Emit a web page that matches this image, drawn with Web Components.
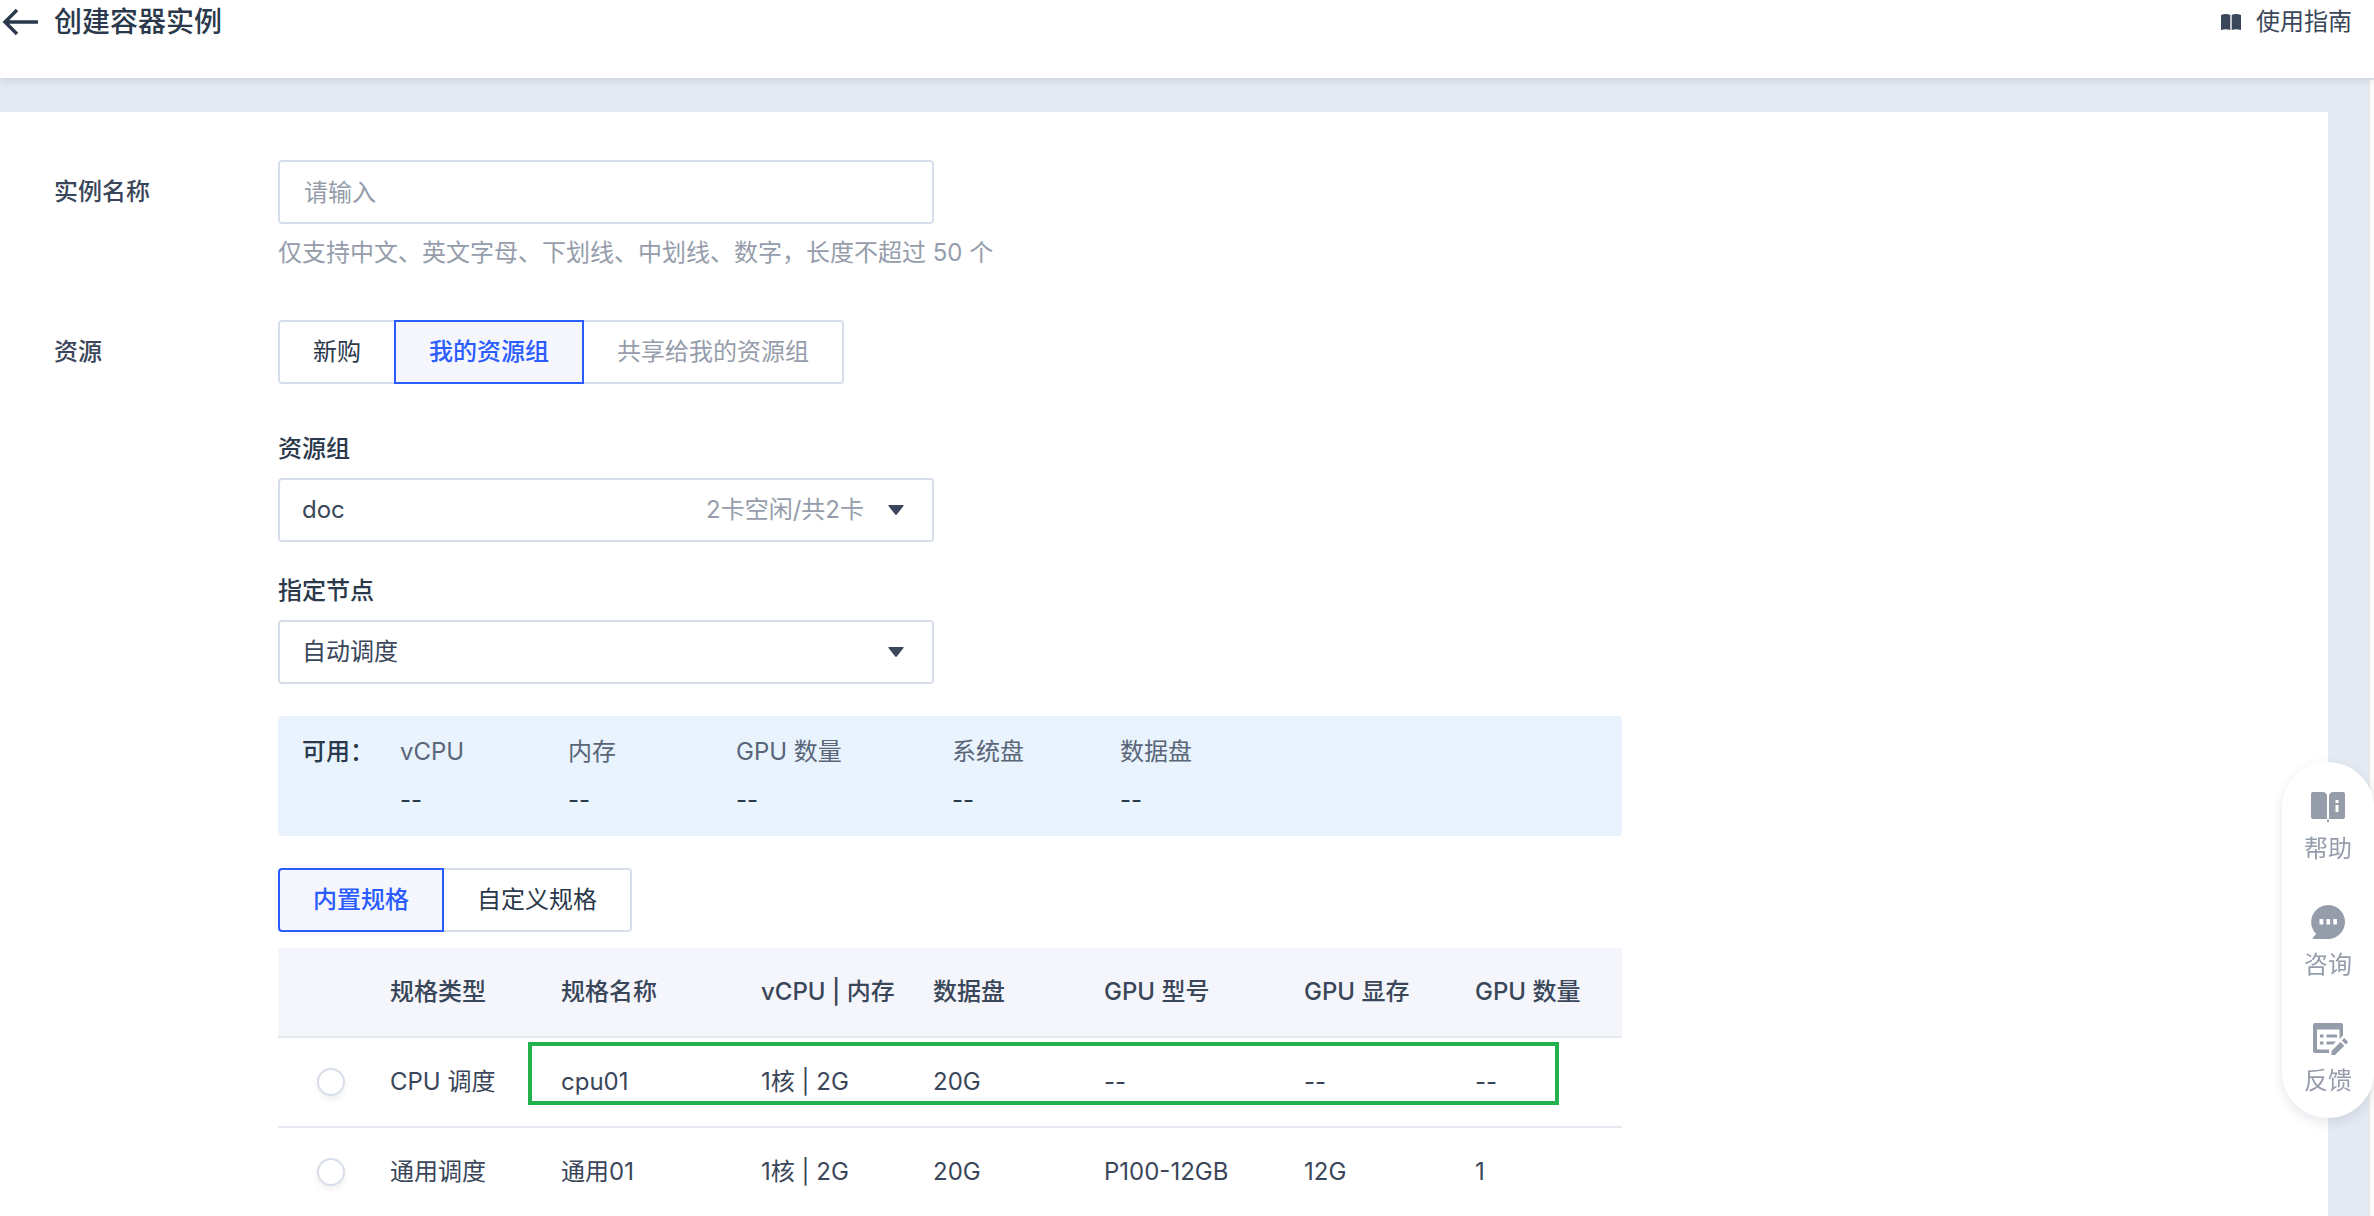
<!DOCTYPE html>
<html lang="zh-CN">
<head>
<meta charset="utf-8">
<meta name="viewport" content="width=device-width, initial-scale=1">
<title>创建容器实例</title>
<style>
  :root {
    --ink: #2a394b;
    --text: #3a4659;
    --soft: #5a6577;
    --muted: #959dab;
    --line: #d8dee9;
    --rule: #e4e8ef;
    --blue: #2b5cff;
    --tint: #f5f7fd;
    --canvas: #e4e9f2;
  }
  html, body { height: 100%; margin: 0; }
  body {
    overflow: hidden;
    background: #fff;
    color: var(--text);
    font: 24px/34px Inter, "Noto Sans CJK SC", sans-serif;
  }
</style>
</head>
<body>
<app-shell>
  <app-header slot="header" heading="创建容器实例" guide="使用指南"></app-header>
  <text-field label="实例名称" placeholder="请输入" hint="仅支持中文、英文字母、下划线、中划线、数字，长度不超过 50 个"></text-field>
  <form-row label="资源">
    <seg-group options="新购|我的资源组|共享给我的资源组" active="1" muted="2"></seg-group>
    <pick-list label="资源组" value="doc" note="2卡空闲/共2卡"></pick-list>
    <pick-list label="指定节点" value="自动调度"></pick-list>
    <quota-panel></quota-panel>
    <seg-group class="spec" options="内置规格|自定义规格" active="0"></seg-group>
    <spec-table></spec-table>
  </form-row>
  <help-dock slot="dock"></help-dock>
</app-shell>

<script>
const define = (name, render) => customElements.define(name, class extends HTMLElement {
  connectedCallback() {
    if (this.shadowRoot) return;
    const attr = key => this.getAttribute(key) || '';
    this.attachShadow({ mode: 'open' }).innerHTML =
      '<style>:host,*{box-sizing:border-box}</style>' + render(attr);
  }
});

define('app-shell', () => `
  <style>
    :host { display: flex; flex-direction: column; height: 100vh; }
    .body { flex: 1; min-height: 0; display: flex; background: var(--canvas); overflow: hidden; }
    main { flex: 1; min-width: 0; margin: 34px 40px 0 0; padding: 48px 54px 0; background: #fff;
           display: flex; flex-direction: column; gap: 50px; }
    .track { width: 6px; margin-top: 2px; background: #fafafa; border-left: 2px solid #e8e8e8; }
  </style>
  <slot name="header"></slot>
  <div class="body"><main><slot></slot></main><div class="track"></div></div>
  <slot name="dock"></slot>`);

define('app-header', attr => `
  <style>
    :host { display: flex; align-items: flex-start; justify-content: space-between; height: 78px;
            padding: 0 22px 0 0; background: #fff; box-shadow: 0 2px 8px rgba(40,60,50,.14);
            position: relative; color: var(--ink); }
    .left, a { display: flex; align-items: center; height: 44px; }
    button { width: 54px; height: 44px; padding: 0; border: 0; background: none; color: inherit; display: flex; align-items: center; }
    h1 { margin: 0; font-size: 28px; line-height: 40px; font-weight: 500; }
    a { gap: 14px; color: var(--text); text-decoration: none; }
  </style>
  <div class="left">
    <button aria-label="返回"><svg width="40" height="28" viewBox="0 0 40 28" fill="none" stroke="currentColor" stroke-width="3.4"><path d="M38 14H5M17 2 5 14l12 12"/></svg></button>
    <h1>${attr('heading')}</h1>
  </div>
  <a href="#"><svg width="22" height="18" viewBox="0 0 22 18" fill="currentColor"><path d="M1 2q5-2 9.300 0v15Q6 15.500 1 17zM11.700 2Q16 0 21 2v15q-5-1.500-9.300 0z"/></svg>${attr('guide')}</a>`);

define('text-field', attr => `
  <style>
    :host { display: grid; grid-template-columns: 224px 1fr; }
    label { line-height: 64px; font-weight: 500; color: var(--text); }
    input { display: block; width: 100%; max-width: 656px; height: 64px; padding: 0 24px; border: 2px solid var(--line);
            border-radius: 4px; background: #fff; font: inherit; color: var(--text); outline: 0; }
    input::placeholder { color: var(--muted); opacity: 1; }
    p { margin: 12px 0 0; color: var(--muted); }
  </style>
  <label for="f">${attr('label')}</label>
  <div><input id="f" type="text" placeholder="${attr('placeholder')}" aria-describedby="h"><p id="h">${attr('hint')}</p></div>`);

define('form-row', attr => `
  <style>
    :host { display: grid; grid-template-columns: 224px minmax(0, 1fr); }
    .label { line-height: 64px; font-weight: 500; }
    .fields { display: flex; flex-direction: column; align-items: flex-start; }
  </style>
  <div class="label">${attr('label')}</div>
  <div class="fields"><slot></slot></div>`);

define('seg-group', attr => `
  <style>
    :host { display: flex; margin-bottom: 48px; }
    :host(.spec) { margin-bottom: 16px; }
    button { height: 64px; padding: 0 33px; margin-left: -2px; border: 2px solid var(--line); background: #fff;
             font: inherit; color: var(--ink); }
    button:first-of-type { margin-left: 0; border-radius: 4px 0 0 4px; }
    button:last-of-type { border-radius: 0 4px 4px 0; }
    button.muted { color: var(--muted); }
    button[aria-pressed=true] { position: relative; border-color: var(--blue); background: var(--tint); color: var(--blue); font-weight: 500; }
  </style>
  ${attr('options').split('|').map((text, i) =>
    `<button aria-pressed="${String(i) === attr('active')}" class="${String(i) === attr('muted') ? 'muted' : ''}">${text}</button>`).join('')}`);

define('pick-list', attr => `
  <style>
    :host { display: block; width: 100%; max-width: 656px; margin-bottom: 32px; }
    label { display: block; margin-bottom: 12px; font-weight: 500; color: var(--ink); }
    .box { display: grid; grid-template-columns: 1fr auto; align-items: center; }
    select { grid-area: 1 / 1 / 2 / 3; appearance: none; width: 100%; height: 64px; padding: 0 22px; border: 2px solid var(--line);
             border-radius: 4px; background: #fff; font: inherit; color: var(--text); outline: 0; }
    .end { grid-area: 1 / 2; display: flex; align-items: center; gap: 24px; padding-right: 30px; color: var(--muted); pointer-events: none; }
    svg { color: var(--text); }
  </style>
  <label for="s">${attr('label')}</label>
  <div class="box">
    <select id="s"><option>${attr('value')}</option></select>
    <span class="end">${attr('note')}<svg width="16" height="10" viewBox="0 0 16 10" fill="currentColor"><path d="M1 0h14q1.200 0 .5 1L9 9.200q-1 1-2 0L.500 1Q-.200 0 1 0z"/></svg></span>
  </div>`);

define('quota-panel', () => `
  <style>
    :host { display: grid; grid-template-columns: 98px 168px 168px 216px 168px 1fr; width: 100%; max-width: 1344px;
            padding: 19px 24px; margin-bottom: 32px; border-radius: 4px; background: #e8f3fe; }
    b { font-weight: 500; color: var(--ink); }
    dl { margin: 0; }
    dt { color: var(--soft); margin-bottom: 14px; }
    dd { margin: 0; color: var(--ink); }
  </style>
  <b>可用：</b>
  ${['vCPU', '内存', 'GPU 数量', '系统盘', '数据盘'].map(t => `<dl><dt>${t}</dt><dd>--</dd></dl>`).join('')}`);

define('spec-table', () => {
  const rows = [
    ['CPU 调度', 'cpu01', '1核 | 2G', '20G', '--', '--', '--'],
    ['通用调度', '通用01', '1核 | 2G', '20G', 'P100-12GB', '12G', '1']
  ];
  return `
  <style>
    :host { display: block; position: relative; width: 100%; max-width: 1344px; }
    table { width: 100%; table-layout: fixed; border-collapse: separate; border-spacing: 0; }
    th, td { height: 90px; padding: 0 0 0 24px; border-bottom: 2px solid var(--rule); text-align: left; font-weight: 400; white-space: nowrap; }
    th { background: #f5f6fb; font-weight: 500; }
    td:first-child { padding-left: 39px; }
    input { appearance: none; display: block; width: 28px; height: 28px; margin: 0; border: 2px solid var(--line); border-radius: 50%;
            background: #fff; box-shadow: 0 4px 6px rgba(0,0,0,.06); }
    .mark { position: absolute; left: 250px; top: 94px; width: 1031px; height: 63px; border: 4px solid #22b14c; pointer-events: none; }
  </style>
  <table>
    <colgroup>${[88, 171, 200, 172, 171, 200, 171, 171].map(w => `<col style="width:${w}px">`).join('')}</colgroup>
    <thead><tr><th></th>${['规格类型', '规格名称', 'vCPU | 内存', '数据盘', 'GPU 型号', 'GPU 显存', 'GPU 数量'].map(t => `<th scope="col">${t}</th>`).join('')}</tr></thead>
    <tbody>${rows.map(r => `<tr><td><input type="radio" name="spec" aria-label="${r[1]}"></td>${r.map(c => `<td>${c}</td>`).join('')}</tr>`).join('')}</tbody>
  </table>
  <div class="mark"></div>`;
});

define('help-dock', () => `
  <style>
    :host { position: fixed; right: 0; bottom: 98px; width: 92px; padding: 26px 0 20px; border-radius: 46px; background: #fff;
            box-shadow: 0 4px 12px rgba(40,60,90,.12); display: flex; flex-direction: column; gap: 38px; }
    button { display: flex; flex-direction: column; align-items: center; gap: 8px; height: 78px; padding: 0; border: 0; background: none; font: inherit; color: var(--muted); }
    svg { flex: none; overflow: visible; }
  </style>
  <button><svg width="36" height="36" viewBox="0 0 36 36" fill="currentColor"><path fill-rule="evenodd" d="M3 4h9.500Q17 4 17 8.500V31H3q-2 0-2-2V6q0-2 2-2zM23.500 4H33q2 0 2 2v23q0 2-2 2H19V8.500Q19 4 23.500 4zM25.500 12v3h3v-3zm0 5v7h3v-7z"/><path d="M17 31.500h2v2.500h-2z"/></svg>帮助</button>
  <button><svg width="36" height="36" viewBox="0 0 36 36" fill="currentColor"><path fill-rule="evenodd" d="M18 1a17 17 0 0 1 0 34H3.500q-1.500-.500-.500-1.500l3-3.500A17 17 0 0 1 18 1zM9.500 15v5.500h3.800V15zm7 0v5.500h3.600V15zm6.800 0v5.500h3.600V15z"/></svg>咨询</button>
  <button><svg width="36" height="36" viewBox="0 0 36 36" fill="currentColor"><path fill-rule="evenodd" d="M5 3h26q2 0 2 2v10.500L29.500 19V9.500H7V29.500h12v3.500H5q-2 0-2-2V5q0-2 2-2z"/><path d="M10 14.500h3.500v3H10zm0 7h3.500v3H10zm6.500-7H27v3H16.500zm0 7H26l-3 3h-6.500zM21.500 31l9-9 3.800 3.800L25 35h-3.500zM31.800 20.500l2.400-2.400 4 4-2.400 2.400z"/></svg>反馈</button>`);
</script>
</body>
</html>
